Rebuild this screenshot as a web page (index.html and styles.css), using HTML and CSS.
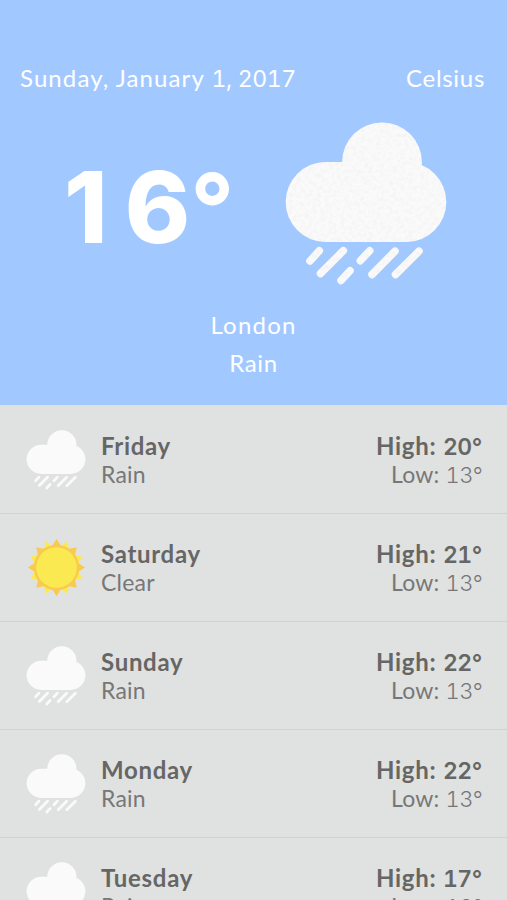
FILE: index.html
```html
<!DOCTYPE html>
<html lang="en">
<head>
    <meta charset="UTF-8">
    <title>Weather</title>
    <link rel="stylesheet" href="styles.css">
</head>
<body>

<!-- Shared icons -->
<svg class="icon-defs" width="0" height="0">
    <filter id="grain" x="0" y="0" width="100%" height="100%">
        <feTurbulence type="fractalNoise" baseFrequency="0.25" numOctaves="3" result="noise"/>
        <feColorMatrix in="noise" type="matrix" values="0 0 0 0 0.87  0 0 0 0 0.87  0 0 0 0 0.87  1.6 0 0 0 -0.65" result="specks"/>
        <feComposite in="specks" in2="SourceGraphic" operator="in" result="texture"/>
        <feMerge>
            <feMergeNode in="SourceGraphic"/>
            <feMergeNode in="texture"/>
        </feMerge>
    </filter>
    <symbol id="rain" viewBox="0 0 162 164">
        <g class="cloud">
            <circle cx="97" cy="40.3" r="39.9"/>
            <rect x="0.7" y="40" width="160.6" height="80" rx="40"/>
        </g>
        <path class="drops" d="M34.3 128.7L25 139M58.3 128.7L35.5 151.5M65 148.7L56 158.5M84.7 128.7L75.3 138.7M110 129.2L87 152.5M134 129.2L110.5 152.5"/>
    </symbol>
    <symbol id="clear" viewBox="-30.5 -29.5 60 60">
        <g class="ray-light">
            <path id="ray" d="M-4.5 -21.5L0 -28.3L4.5 -21.5Z" transform="rotate(22.5)"/>
            <use href="#ray" transform="rotate(45)"/>
            <use href="#ray" transform="rotate(90)"/>
            <use href="#ray" transform="rotate(135)"/>
            <use href="#ray" transform="rotate(180)"/>
            <use href="#ray" transform="rotate(225)"/>
            <use href="#ray" transform="rotate(270)"/>
            <use href="#ray" transform="rotate(315)"/>
        </g>
        <g class="ray-dark">
            <path id="ray-main" d="M-4.5 -21.5L0 -28.7L4.5 -21.5Z"/>
            <use href="#ray-main" transform="rotate(45)"/>
            <use href="#ray-main" transform="rotate(90)"/>
            <use href="#ray-main" transform="rotate(135)"/>
            <use href="#ray-main" transform="rotate(180)"/>
            <use href="#ray-main" transform="rotate(225)"/>
            <use href="#ray-main" transform="rotate(270)"/>
            <use href="#ray-main" transform="rotate(315)"/>
            <circle r="22.6"/>
        </g>
        <circle class="sun" r="20.3"/>
    </symbol>
</svg>

<div class="current">
    <div class="top-bar">
        <span class="date">Sunday, January <span class="num">1, 2017</span></span>
        <span class="unit">Celsius</span>
    </div>
    <div class="now">
        <div class="temp">1<span class="last-digit">6</span><span class="degree">°</span></div>
        <svg class="now-icon"><use href="#rain"/></svg>
    </div>
    <div class="city">London</div>
    <div class="condition">Rain</div>
</div>

<div class="forecast">
    <div class="row">
        <svg class="row-icon"><use href="#rain"/></svg>
        <div class="info">
            <div class="day">Friday</div>
            <div class="sky">Rain</div>
        </div>
        <div class="range">
            <div class="high">High: <span class="num">20°</span></div>
            <div class="low">Low: <span class="num">13°</span></div>
        </div>
    </div>
    <div class="row">
        <svg class="row-icon"><use href="#clear"/></svg>
        <div class="info">
            <div class="day">Saturday</div>
            <div class="sky">Clear</div>
        </div>
        <div class="range">
            <div class="high">High: <span class="num">21°</span></div>
            <div class="low">Low: <span class="num">13°</span></div>
        </div>
    </div>
    <div class="row">
        <svg class="row-icon"><use href="#rain"/></svg>
        <div class="info">
            <div class="day">Sunday</div>
            <div class="sky">Rain</div>
        </div>
        <div class="range">
            <div class="high">High: <span class="num">22°</span></div>
            <div class="low">Low: <span class="num">13°</span></div>
        </div>
    </div>
    <div class="row">
        <svg class="row-icon"><use href="#rain"/></svg>
        <div class="info">
            <div class="day">Monday</div>
            <div class="sky">Rain</div>
        </div>
        <div class="range">
            <div class="high">High: <span class="num">22°</span></div>
            <div class="low">Low: <span class="num">13°</span></div>
        </div>
    </div>
    <div class="row">
        <svg class="row-icon"><use href="#rain"/></svg>
        <div class="info">
            <div class="day">Tuesday</div>
            <div class="sky">Rain</div>
        </div>
        <div class="range">
            <div class="high">High: <span class="num">17°</span></div>
            <div class="low">Low: <span class="num">13°</span></div>
        </div>
    </div>
</div>

</body>
</html>
```
FILE: styles.css
```css
body {
    font-family: Lato, "Open Sans", sans-serif;
    background: #e0e2e1;
    margin: 0;
    height: 900px;
    overflow: hidden;
}
.icon-defs {
    display: block;
}
.current {
    height: 405px;
    box-sizing: border-box;
    padding-top: 63px;
    background: #a2c9ff;
    color: white;
    font-size: 24px;
    line-height: 30px;
    text-align: center;
}
.top-bar {
    display: flex;
    justify-content: space-between;
    padding: 0 22px 0 20px;
}
.date {
    letter-spacing: 1.1px;
}
.unit {
    letter-spacing: 0.7px;
}
.num {
    font-family: Inter, sans-serif;
    font-size: 23px;
    font-variant-numeric: tabular-nums;
    line-height: 1;
    letter-spacing: -0.4px;
}
.now {
    display: flex;
    height: 164px;
    padding: 29px 60px 0 64px;
    justify-content: space-between;
}
.temp {
    display: flex;
    font-family: Inter, sans-serif;
    font-size: 99px;
    font-weight: 800;
    line-height: 170px;
    letter-spacing: 17px;
}
.last-digit {
    letter-spacing: 0;
}
.degree {
    font-size: 96px;
    font-weight: 700;
    letter-spacing: 0;
}
.now-icon {
    width: 162px;
    height: 164px;
    filter: url(#grain);
}
.city {
    margin-top: 24px;
    letter-spacing: 1.2px;
}
.condition {
    margin-top: 8px;
    letter-spacing: 0.6px;
}
.forecast {
    padding-top: 1px;
}
.row {
    display: flex;
    height: 108px;
    box-sizing: border-box;
    padding: 24px 25px 0 26px;
    border-bottom: 1px solid #d0d3d2;
    color: #666;
}
.row-icon {
    width: 60px;
    height: 60px;
}
.info {
    margin-left: 15px;
}
.day, .high {
    padding-top: 1px;
    font-size: 24px;
    line-height: 29px;
    font-weight: 700;
    letter-spacing: 0.7px;
}
.sky, .low {
    font-size: 23px;
    line-height: 29px;
    letter-spacing: 0.2px;
    color: #777;
}
.high .num {
    font-weight: 600;
    letter-spacing: -0.4px;
}
.low .num {
    font-size: 22px;
    font-weight: 300;
    letter-spacing: -0.7px;
}
.range {
    margin-left: auto;
    text-align: right;
}
.cloud {
    fill: #fafafa;
}
.drops {
    fill: none;
    stroke: #fafafa;
    stroke-width: 7.5;
    stroke-linecap: round;
}
.ray-light {
    fill: #fde94f;
}
.ray-dark {
    fill: #f8cb4f;
}
.sun {
    fill: #fbe951;
}
```
